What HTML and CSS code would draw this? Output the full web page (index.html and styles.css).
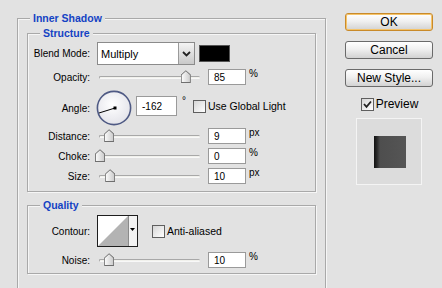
FILE: index.html
```html
<!DOCTYPE html>
<html lang="en">
<head>
  <meta charset="UTF-8">
  <title>Inner Shadow</title>
  <link rel="stylesheet" href="styles.css">
</head>
<body>
  <div class="dialog">
    <div class="main">
      <fieldset class="group outer">
        <legend>Inner Shadow</legend>

        <!-- Structure -->
        <fieldset class="group inner structure">
          <legend>Structure</legend>

          <div class="row row-blend">
            <label>Blend Mode:</label>
            <div class="controls">
              <div class="select">
                <span class="select-text">Multiply</span>
                <span class="select-btn">
                  <svg width="9" height="6" viewBox="0 0 9 6"><path d="M1 1 L4.5 4.5 L8 1" fill="none" stroke="#222" stroke-width="1.8"/></svg>
                </span>
              </div>
              <div class="swatch"></div>
            </div>
          </div>

          <div class="row">
            <label>Opacity:</label>
            <div class="controls">
              <div class="slider"><div class="track"></div><span class="thumb" style="left: 85%"></span></div>
              <div class="field">85</div><span class="unit">%</span>
            </div>
          </div>

          <div class="row row-angle">
            <label>Angle:</label>
            <div class="controls">
              <svg class="dial" width="36" height="36" viewBox="0 0 36 36">
                <defs>
                  <radialGradient id="dialFill" cx="0.45" cy="0.4" r="0.6">
                    <stop offset="0" stop-color="#ffffff"/>
                    <stop offset="1" stop-color="#e4e4ea"/>
                  </radialGradient>
                </defs>
                <circle cx="18" cy="18" r="16.6" fill="url(#dialFill)" stroke="#4f5a84" stroke-width="1.6"/>
                <line x1="19" y1="18" x2="3" y2="23" stroke="#000" stroke-width="1"/>
                <rect x="17.5" y="16.5" width="3" height="3" fill="#000"/>
              </svg>
              <div class="field field-angle">-162</div>
              <span class="deg">°</span>
              <span class="check"></span>
              <span class="check-label">Use Global Light</span>
            </div>
          </div>

          <div class="row">
            <label>Distance:</label>
            <div class="controls">
              <div class="slider"><div class="track"></div><span class="thumb" style="left: 9%"></span></div>
              <div class="field">9</div><span class="unit">px</span>
            </div>
          </div>

          <div class="row">
            <label>Choke:</label>
            <div class="controls">
              <div class="slider"><div class="track"></div><span class="thumb" style="left: 0%"></span></div>
              <div class="field">0</div><span class="unit">%</span>
            </div>
          </div>

          <div class="row">
            <label>Size:</label>
            <div class="controls">
              <div class="slider"><div class="track"></div><span class="thumb" style="left: 10%"></span></div>
              <div class="field">10</div><span class="unit">px</span>
            </div>
          </div>
        </fieldset>

        <!-- Quality -->
        <fieldset class="group inner quality">
          <legend>Quality</legend>

          <div class="row row-contour">
            <label>Contour:</label>
            <div class="controls">
              <svg class="contour" width="41" height="32" viewBox="0 0 41 32">
                <rect x="0.5" y="0.5" width="40" height="31" fill="#fff" stroke="#1e1e1e"/>
                <polygon points="1,31 31,1 31,31" fill="#b3b3b3"/>
                <rect x="31" y="1" width="9" height="30" fill="#f2f2f2"/>
                <line x1="31.5" y1="1" x2="31.5" y2="31" stroke="#8a8a8a"/>
                <polygon points="33,13 38,13 35.5,16" fill="#000"/>
              </svg>
              <span class="check check-aa"></span>
              <span class="check-label">Anti-aliased</span>
            </div>
          </div>

          <div class="row row-noise">
            <label>Noise:</label>
            <div class="controls">
              <div class="slider"><div class="track"></div><span class="thumb" style="left: 9%"></span></div>
              <div class="field">10</div><span class="unit">%</span>
            </div>
          </div>
        </fieldset>
      </fieldset>
    </div>

    <div class="side">
      <button class="btn btn-ok">OK</button>
      <button class="btn">Cancel</button>
      <button class="btn">New Style...</button>
      <div class="preview-toggle">
        <span class="check checked">
          <svg width="11" height="11" viewBox="0 0 11 11"><path d="M2 5 L4.5 7.8 L9 2.5" fill="none" stroke="#222" stroke-width="1.8"/></svg>
        </span>
        <span class="preview-label">Preview</span>
      </div>
      <div class="preview-box">
        <div class="preview-square"></div>
      </div>
    </div>
  </div>
</body>
</html>
```

FILE: styles.css
```css
* {
  box-sizing: border-box;
}

body {
  margin: 0;
  background: #e2e2e2;
  font-family: 'Liberation Sans', Arial, sans-serif;
  font-size: 10px;
  color: #000000;
  overflow: hidden;
}

.dialog {
  display: flex;
  height: 288px;
  overflow: hidden;
}

.main {
  padding: 12px 0 0 17px;
  width: 326px;
  flex: none;
}

/* group boxes */

.group {
  margin: 0;
  border: 1px solid #a9a9a9;
  box-shadow: inset 1px 1px 0 #f6f6f6, 1px 1px 0 #f6f6f6;
  min-inline-size: auto;
}

.group legend {
  font-size: 10.5px;
  font-weight: bold;
  color: #1443c4;
  line-height: 13px;
  padding: 0 3px;
  background: #e2e2e2;
}

.outer {
  width: 309px;
  padding: 0 9px 40px;
}

.outer > legend {
  margin-left: 3px;
}

.inner {
  padding: 0;
}

.inner > legend {
  margin-left: 12px;
}

.structure {
  margin-top: 2px;
  padding: 2px 0 7px;
}

.quality {
  margin-top: 7px;
  padding: 3px 0 5px;
}

/* rows */

.row {
  display: grid;
  grid-template-columns: 62px auto;
  column-gap: 7px;
  align-items: center;
  margin-top: 4px;
}

.row:first-of-type {
  margin-top: 0;
}

.row label {
  text-align: right;
}

.controls {
  display: flex;
  align-items: center;
}

.row-angle {
  margin-top: 5px;
}

.row-angle + .row {
  margin-top: 2px;
}

.row-noise {
  margin-top: 5px;
}

/* blend select */

.select {
  display: flex;
  width: 98px;
  height: 23px;
  background: #ffffff;
  border: 1px solid #8b8b8b;
}

.select-text {
  flex: 1;
  padding: 5px 0 0 3px;
  font-size: 11px;
}

.select-btn {
  width: 16px;
  display: flex;
  align-items: center;
  justify-content: center;
  background: linear-gradient(#f4f4f4, #c9c9c9);
  border-left: 1px solid #9a9a9a;
}

.swatch {
  width: 31px;
  height: 17px;
  margin-left: 4px;
  background: #000000;
  border: 1px solid #555555;
}

/* sliders */

.slider {
  position: relative;
  width: 101px;
  height: 16px;
  margin-left: 2px;
  display: flex;
  align-items: center;
}

.track {
  width: 100%;
  height: 3px;
  border-top: 1px solid #a8a8a8;
  border-left: 1px solid #a8a8a8;
  border-bottom: 1px solid #f8f8f8;
  border-radius: 2px;
  background: #f1f1ec;
}

.thumb {
  position: absolute;
  top: 1px;
  width: 10px;
  height: 13px;
  margin-left: -4px;
  background: linear-gradient(90deg, #ffffff, #c8c8c8);
  clip-path: polygon(50% 0, 100% 35%, 100% 100%, 0 100%, 0 35%);
}

.thumb::after {
  content: '';
  position: absolute;
  inset: 0;
  background: #6f6f6f;
  clip-path: polygon(50% 0, 100% 35%, 100% 100%, 0 100%, 0 35%, 50% 0, 50% 9%, 9% 39%, 9% 92%, 91% 92%, 91% 39%, 50% 9%);
}

/* number fields */

.field {
  width: 38px;
  height: 16px;
  margin-left: 8px;
  padding: 3px 0 0 5px;
  background: #ffffff;
  border: 1px solid #9a9a9a;
  line-height: 10px;
}

.unit {
  margin-left: 3px;
  align-self: flex-start;
  margin-top: -1px;
}

/* angle */

.dial {
  margin-left: -1px;
  flex: none;
}

.field-angle {
  width: 41px;
  height: 20px;
  margin-left: 4px;
  margin-top: -4px;
  padding-top: 5px;
}

.deg {
  margin-left: 5px;
  margin-top: -16px;
}

.check {
  width: 13px;
  height: 13px;
  border: 1px solid #5f5f5f;
  background: linear-gradient(135deg, #d6d6d6, #ffffff);
  display: inline-flex;
  align-items: center;
  justify-content: center;
  flex: none;
}

.row-angle .check {
  margin-left: 7px;
  margin-top: -4px;
}

.check-label {
  margin-left: 2px;
  font-size: 10.5px;
}

.row-angle .check-label {
  margin-top: -4px;
}

/* contour */

.contour {
  flex: none;
}

.check-aa {
  margin-left: 14px;
}

/* right side */

.side {
  width: 88px;
  margin-left: 19px;
  padding-top: 13px;
  display: flex;
  flex-direction: column;
  align-items: center;
}

.btn {
  width: 88px;
  height: 18px;
  margin: 0 0 10px;
  padding: 0;
  font-family: 'Liberation Sans', Arial, sans-serif;
  font-size: 12px;
  color: #000000;
  border: 1px solid #6a6a6a;
  border-radius: 3px;
  background: linear-gradient(#ffffff, #f0f0f0 45%, #d2d2d2);
}

.btn-ok {
  border-color: #c98a2a;
  box-shadow: inset 0 0 0 1px #f5c46a;
}

.preview-toggle {
  display: flex;
  align-items: center;
  margin-top: 0;
  padding-left: 1px;
}

.preview-label {
  font-size: 12px;
  margin-left: 2px;
}

.preview-box {
  width: 66px;
  height: 67px;
  margin-top: 7px;
  background: #dcdcdc;
  border: 1px solid #f4f4f4;
  display: flex;
  align-items: center;
  justify-content: center;
}

.preview-square {
  width: 32px;
  height: 32px;
  margin-left: 1px;
  background: linear-gradient(90deg, #111111, #2a2a2a 3px, #4e4e4e 6px, #555555);
}
```
